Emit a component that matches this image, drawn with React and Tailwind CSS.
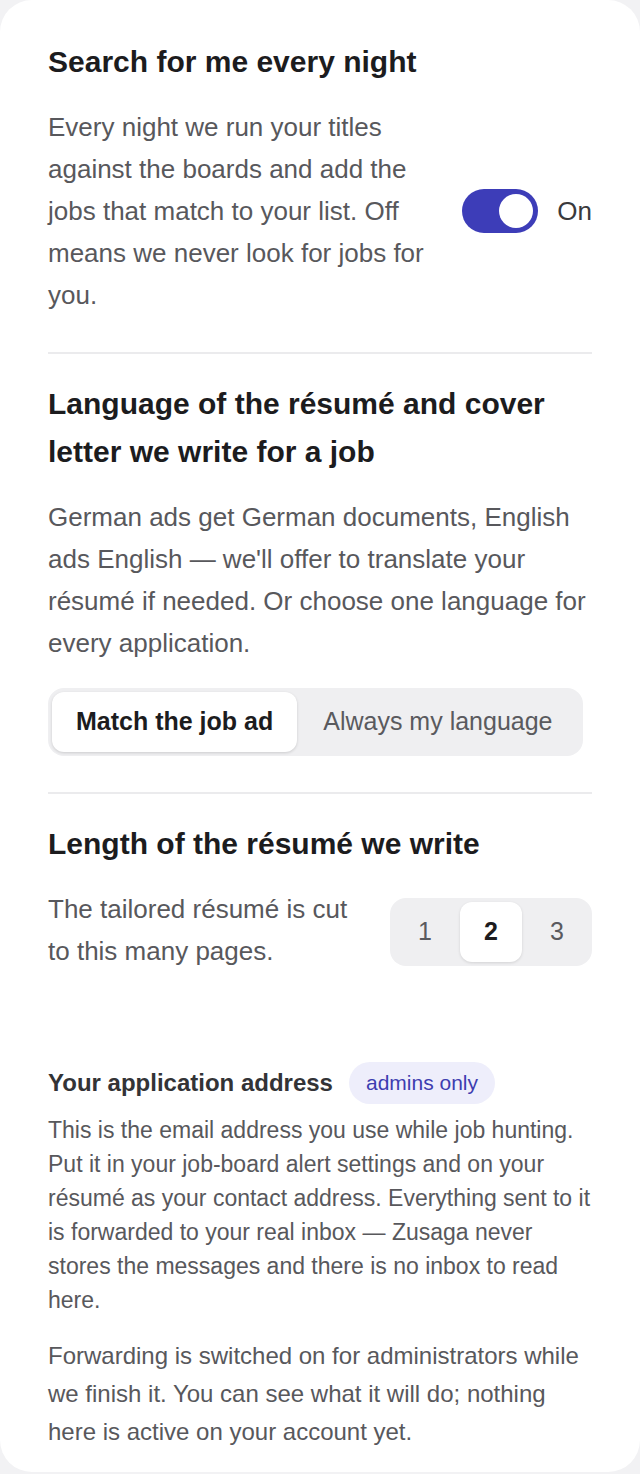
import React from "react";

export default function App() {
  return (
    <div className="min-h-[1474px] bg-[#f2f2f4]" style={{ fontFamily: '"Liberation Sans", Arial, sans-serif' }}>
      <div className="bg-white rounded-[32px] px-12 pt-[38px] pb-[21px]">
        {/* Section 1 */}
        <section className="pb-9">
          <h2 className="text-[30px] leading-[48px] font-bold text-[#1c1c1e]">Search for me every night</h2>
          <div className="mt-5 flex items-center gap-6">
            <p className="flex-1 text-[26px] leading-[42px] text-[#58585c]">
              Every night we run your titles against the boards and add the jobs that match to your list. Off means we never look for jobs for you.
            </p>
            <div className="flex items-center gap-[19px]">
              <div className="w-[76px] h-[44px] rounded-full bg-[#3d3db8] p-[5px] flex justify-end">
                <div className="w-[34px] h-[34px] rounded-full bg-white" />
              </div>
              <span className="text-[26px] text-[#3a3a3c]">On</span>
            </div>
          </div>
        </section>

        {/* Section 2 */}
        <section className="border-t-2 border-[#ebebed] pt-[26px] pb-9">
          <h2 className="text-[30px] leading-[48px] font-bold text-[#1c1c1e]">
            Language of the résumé and cover letter we write for a job
          </h2>
          <p className="mt-5 text-[26px] leading-[42px] text-[#58585c]">
            German ads get German documents, English ads English — we'll offer to translate your résumé if needed. Or choose one language for every application.
          </p>
          <div className="mt-6 inline-flex p-1 rounded-[16px] bg-[#efeff1]">
            <button className="h-[60px] px-6 rounded-[12px] bg-white shadow-[0_1px_3px_rgba(0,0,0,0.15)] text-[25px] font-bold text-[#1c1c1e]">
              Match the job ad
            </button>
            <button className="h-[60px] px-[26px] rounded-[12px] text-[25px] text-[#5a5a5e]">
              Always my language
            </button>
          </div>
        </section>

        {/* Section 3 */}
        <section className="border-t-2 border-[#ebebed] pt-[26px]">
          <h2 className="text-[30px] leading-[48px] font-bold text-[#1c1c1e]">Length of the résumé we write</h2>
          <div className="mt-5 flex items-center gap-6">
            <p className="flex-1 text-[26px] leading-[42px] text-[#58585c]">
              The tailored résumé is cut to this many pages.
            </p>
            <div className="flex gap-1 p-1 rounded-[16px] bg-[#efeff1] mt-[4px]">
              <button className="w-[62px] h-[60px] rounded-[12px] text-[25px] text-[#5a5a5e]">1</button>
              <button className="w-[62px] h-[60px] rounded-[12px] bg-white shadow-[0_1px_3px_rgba(0,0,0,0.12)] text-[25px] font-bold text-[#1c1c1e]">2</button>
              <button className="w-[62px] h-[60px] rounded-[12px] text-[25px] text-[#5a5a5e]">3</button>
            </div>
          </div>
        </section>

        {/* Section 4 */}
        <section className="mt-[90px]">
          <div className="flex items-center gap-4">
            <h3 className="text-[24px] font-bold text-[#333336]">Your application address</h3>
            <span className="h-[42px] px-[17px] flex items-center rounded-full bg-[#eeeefb] text-[21px] text-[#3d3db0]">
              admins only
            </span>
          </div>
          <p className="mt-[9px] text-[23px] leading-[34px] text-[#58585c]">
            This is the email address you use while job hunting. Put it in your job-board alert settings and on your résumé as your contact address. Everything sent to it is forwarded to your real inbox — Zusaga never stores the messages and there is no inbox to read here.
          </p>
          <p className="mt-5 text-[24px] leading-[38px] text-[#58585c]">
            Forwarding is switched on for administrators while we finish it. You can see what it will do; nothing here is active on your account yet.
          </p>
        </section>
      </div>
    </div>
  );
}
